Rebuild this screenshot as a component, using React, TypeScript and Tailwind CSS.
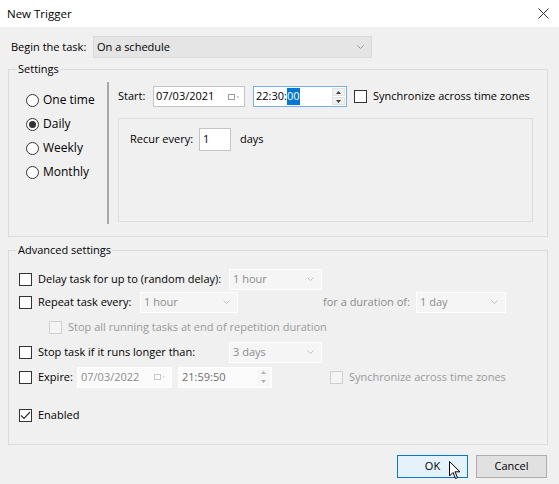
import React from "react";

const font = { fontFamily: '"Open Sans", "Noto Sans", sans-serif' };

function Chevron({ className = "" }: { className?: string }) {
  return (
    <svg width="7" height="4" viewBox="0 0 7 4" className={className}>
      <path d="M0.5 0.5 L3.5 3.5 L6.5 0.5" fill="none" stroke="currentColor" strokeWidth="1" />
    </svg>
  );
}

function CalendarIcon({ dim }: { dim?: boolean }) {
  const c = dim ? "#c8c8c8" : "#9a9a9a";
  return (
    <svg width="12" height="8" viewBox="0 0 12 8">
      <rect x="0.5" y="1.5" width="6" height="5" fill="none" stroke={c} />
      <path d="M8.5 3.5 L11 3.5 L9.75 5 Z" fill={c} />
    </svg>
  );
}

function Spinner({ dim }: { dim?: boolean }) {
  const c = dim ? "#b0b0b0" : "#404040";
  return (
    <div className="flex flex-col h-full w-[14px] py-[1px] pr-[1px] gap-[1px]">
      {[0, 1].map((i) => (
        <div
          key={i}
          className={`flex-1 flex items-center justify-center ${dim ? "bg-[#f7f7f7]" : "bg-[#f0f0f0] border border-[#e2e2e2]"}`}
        >
          <svg width="5" height="3" viewBox="0 0 5 3">
            <path d={i === 0 ? "M0 3 L2.5 0 L5 3 Z" : "M0 0 L2.5 3 L5 0 Z"} fill={c} />
          </svg>
        </div>
      ))}
    </div>
  );
}

function Radio({ label, checked }: { label: string; checked?: boolean }) {
  return (
    <div className="flex items-center h-[24px] gap-[4px]">
      <span className="w-[13px] h-[13px] rounded-full border border-[#333] bg-white flex items-center justify-center">
        {checked && <span className="w-[7px] h-[7px] rounded-full bg-[#333]" />}
      </span>
      <span className="text-[12px]">{label}</span>
    </div>
  );
}

function Check({ checked, disabled }: { checked?: boolean; disabled?: boolean }) {
  return (
    <span
      className={`w-[13px] h-[13px] shrink-0 border flex items-center justify-center ${
        disabled ? "border-[#cfcfcf] bg-[#f4f4f4]" : "border-[#333] bg-white"
      }`}
    >
      {checked && (
        <svg width="11" height="9" viewBox="0 0 11 9">
          <path d="M1 4.5 L4 7.5 L10 1" fill="none" stroke="#333" strokeWidth="1.2" />
        </svg>
      )}
    </span>
  );
}

function DisabledSelect({ value, w }: { value: string; w: string }) {
  return (
    <div className={`${w} h-[21px] border border-white bg-[#f5f5f5] flex items-center pl-[3px] pr-[7px] text-[#8c8c8c]`}>
      <span className="flex-1">{value}</span>
      <Chevron className="text-[#c0c0c0]" />
    </div>
  );
}

export default function App() {
  return (
    <div
      style={font}
      className="relative w-[559px] h-[484px] bg-[#f0f0f0] text-[11px] text-black whitespace-nowrap flex flex-col overflow-hidden"
    >
      {/* Title bar */}
      <div className="h-[27px] bg-white flex items-center justify-between pl-[7px] pr-[10px] shrink-0">
        <span className="text-[11.5px]">New Trigger</span>
        <svg width="11" height="11" viewBox="0 0 11 11">
          <path d="M0.5 0.5 L10.5 10.5 M10.5 0.5 L0.5 10.5" stroke="#333" strokeWidth="1" />
        </svg>
      </div>

      <div className="px-[8px] flex flex-col">
        {/* Begin the task */}
        <div className="mt-[9px] flex items-center h-[22px]">
          <span className="w-[85px] pl-[3px]">Begin the task:</span>
          <div className="w-[279px] h-[22px] bg-[#e5e5e5] border border-[#dadada] flex items-center pl-[3px] pr-[7px]">
            <span className="flex-1">On a schedule</span>
            <Chevron className="text-[#999]" />
          </div>
        </div>

        {/* Settings */}
        <fieldset className="mt-[3px] w-[540px] border border-[#dcdcdc] pb-[12px]">
          <legend className="ml-[8px] px-[1px] leading-[16px]">Settings</legend>
          <div className="mt-[5px] flex h-[142px]">
            <div className="w-[98px] pl-[17px] pt-[6px] flex flex-col">
              <Radio label="One time" />
              <Radio label="Daily" checked />
              <Radio label="Weekly" />
              <Radio label="Monthly" />
            </div>
            <div className="w-[2px] bg-[#a8a8a8]" />
            <div className="flex-1 pl-[9px] pr-[14px] pt-[4px] flex flex-col">
              <div className="flex items-center h-[21px]">
                <span className="w-[35px]">Start:</span>
                <div className="w-[92px] h-[21px] bg-white border border-[#c4c4c4] flex items-center pl-[2px] pr-[4px]">
                  <span className="flex-1">07/03/2021</span>
                  <CalendarIcon />
                </div>
                <div className="ml-[8px] w-[94px] h-[21px] bg-white border border-[#7aaee6] flex items-center pl-[2px]">
                  <span className="flex-1 flex">
                    22:30:<span className="bg-[#0078d7] text-white">00</span>
                  </span>
                  <Spinner />
                </div>
                <span className="ml-[7px]">
                  <Check />
                </span>
                <span className="ml-[6px]">Synchronize across time zones</span>
              </div>
              <div className="mt-[11px] flex-1 mb-[2px] border border-[#dedede] pl-[11px] pt-[9px]">
                <div className="flex items-center h-[23px]">
                  <span className="w-[69px]">Recur every:</span>
                  <div className="w-[32px] h-[23px] bg-white border border-[#c4c4c4] flex items-center pl-[3px]">
                    1
                  </div>
                  <span className="ml-[9px]">days</span>
                </div>
              </div>
            </div>
          </div>
        </fieldset>

        {/* Advanced settings */}
        <fieldset className="mt-[5px] w-[540px] border border-[#dcdcdc] pl-[10px] pt-[10px] pb-[18px]">
          <legend className="ml-[-2px] px-[1px] leading-[16px]">Advanced settings</legend>
          <div className="flex items-center h-[22px]">
            <div className="w-[210px] flex items-center gap-[6px]">
              <Check />
              <span>Delay task for up to (random delay):</span>
            </div>
            <DisabledSelect value="1 hour" w="w-[93px]" />
          </div>
          <div className="mt-[1px] flex items-center h-[22px]">
            <div className="w-[121px] flex items-center gap-[6px]">
              <Check />
              <span>Repeat task every:</span>
            </div>
            <DisabledSelect value="1 hour" w="w-[98px]" />
            <span className="ml-[85px] w-[93px] text-[#8c8c8c]">for a duration of:</span>
            <DisabledSelect value="1 day" w="w-[90px]" />
          </div>
          <div className="mt-[3px] flex items-center h-[22px] pl-[30px] gap-[6px]">
            <Check disabled />
            <span className="text-[#9a9a9a]">Stop all running tasks at end of repetition duration</span>
          </div>
          <div className="mt-[3px] flex items-center h-[22px]">
            <div className="w-[210px] flex items-center gap-[6px]">
              <Check />
              <span>Stop task if it runs longer than:</span>
            </div>
            <DisabledSelect value="3 days" w="w-[93px]" />
          </div>
          <div className="mt-[3px] flex items-center h-[22px]">
            <div className="w-[58px] flex items-center gap-[6px]">
              <Check />
              <span>Expire:</span>
            </div>
            <div className="w-[95px] h-[21px] bg-[#fbfbfb] border border-white flex items-center pl-[3px] pr-[5px] text-[#8c8c8c]">
              <span className="flex-1">07/03/2022</span>
              <CalendarIcon dim />
            </div>
            <div className="ml-[6px] w-[94px] h-[21px] bg-[#fbfbfb] border border-white flex items-center pl-[3px] text-[#6e6e6e]">
              <span className="flex-1">21:59:50</span>
              <Spinner dim />
            </div>
            <span className="ml-[58px]">
              <Check disabled />
            </span>
            <span className="ml-[6px] text-[#9a9a9a]">Synchronize across time zones</span>
          </div>
          <div className="mt-[16px] flex items-center h-[22px] gap-[6px]">
            <Check checked />
            <span>Enabled</span>
          </div>
        </fieldset>

        {/* Buttons */}
        <div className="mt-[10px] flex justify-end gap-[8px] pr-[4px]">
          <button className="w-[71px] h-[23px] bg-[#e5f1fb] border border-[#0078d7]">OK</button>
          <button className="w-[71px] h-[23px] bg-[#e1e1e1] border border-[#adadad]">Cancel</button>
        </div>
      </div>

      {/* Mouse cursor */}
      <svg className="absolute left-[449px] top-[461px]" width="12" height="19" viewBox="0 0 12 19">
        <path d="M0.5 0.5 L0.5 15 L4 11.5 L6.5 17.5 L8.5 16.5 L6 10.8 L11 10.8 Z" fill="white" stroke="black" strokeWidth="1" />
      </svg>
    </div>
  );
}
